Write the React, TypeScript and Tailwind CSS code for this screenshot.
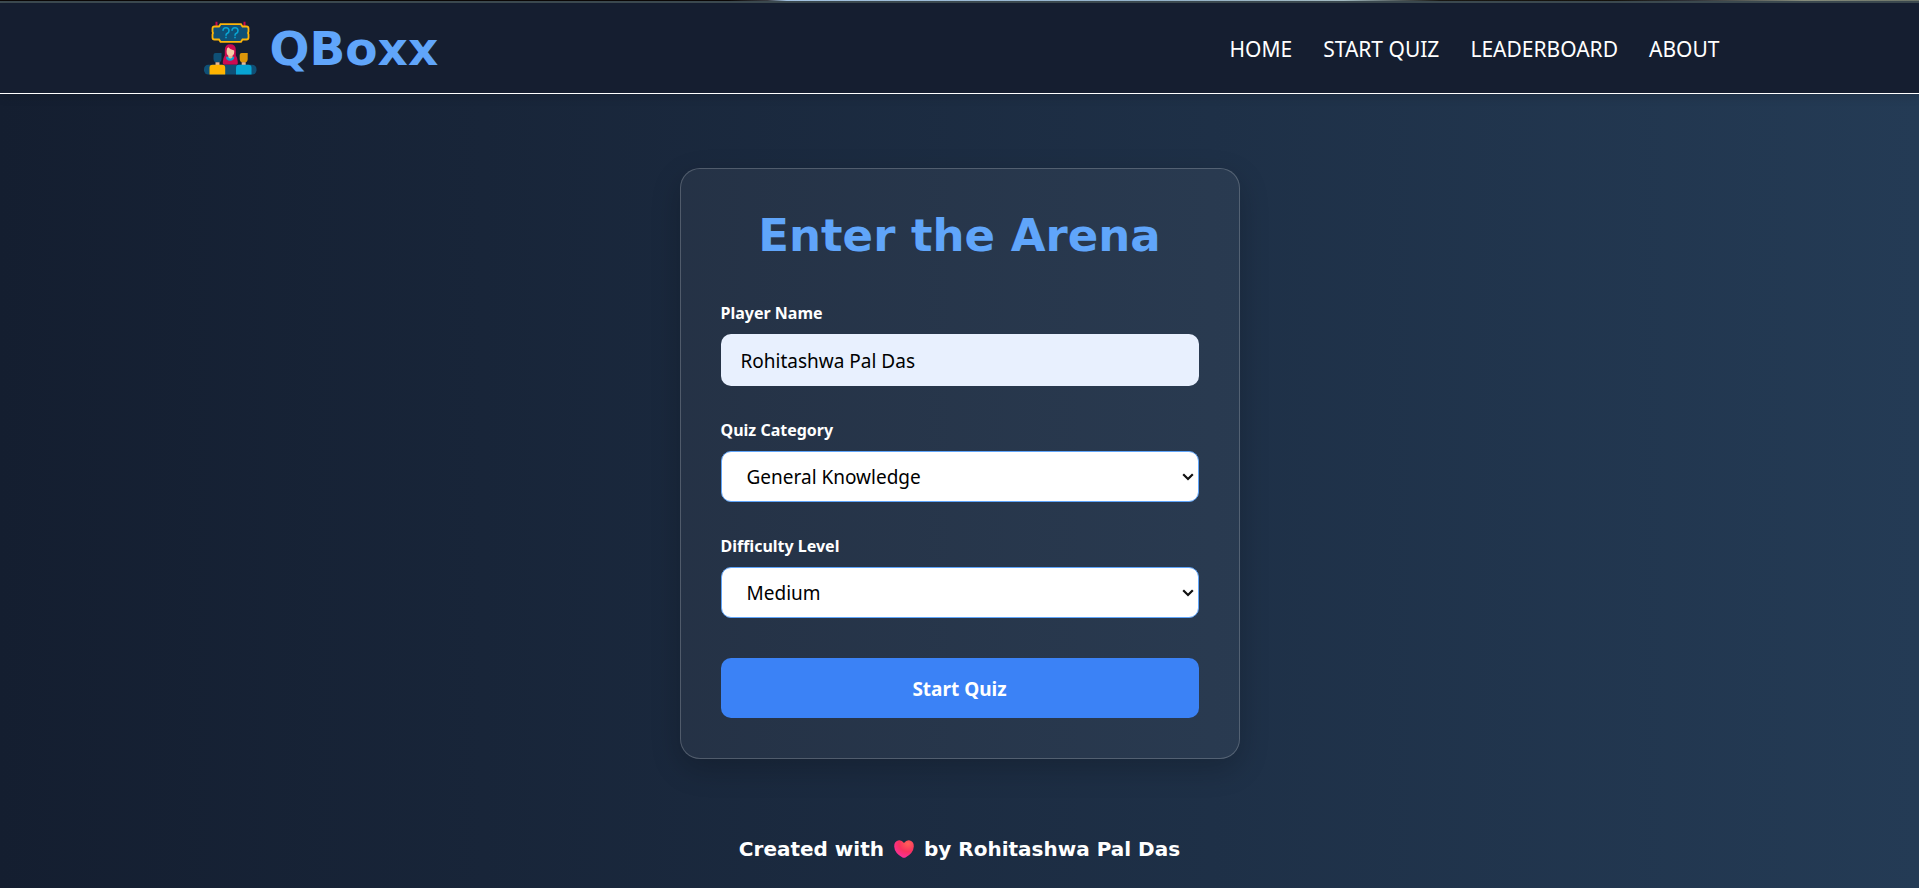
import React from 'react';

const links = ['HOME', 'START QUIZ', 'LEADERBOARD', 'ABOUT'];

const categories = ['General Knowledge', 'Science', 'History', 'Sports'];
const levels = ['Easy', 'Medium', 'Hard'];

function Logo() {
  return (
    <svg viewBox="0 0 60 60" className="h-[60px] w-[60px]" aria-hidden="true">
      <path d="M16.500 3.800v5M44.500 3.800v5" stroke="#c8094f" strokeWidth="2" />
      <path
        d="M20.500 6.200h20.500l1.500 2.300h4q2 0 2 2v3l-.5 1.500.5 1.500v3q0 2-2 2h-4l-1.500 2.300h-20.500l-1.500-2.300h-4.500q-2 0-2-2v-3l.5-1.500-.5-1.500v-3q0-2 2-2h4.500z"
        fill="#0f5076"
        stroke="#fdb509"
        strokeWidth="1.800"
      />
      <path
        d="M23 12.700q0-3 3-3t3 3q0 2-2 2.800-1 .5-1 2.300M32 12.700q0-3 3-3t3 3q0 2-2 2.800-1 .5-1 2.300M26 18.800v1.500M35 18.800v1.500"
        fill="none"
        stroke="#08a5d3"
        strokeWidth="1.600"
      />
      <path d="M24 46.700q-1.600 0-1.200-2.700l.6-3.500q.4-1.500 1.400-3v-5.500q0-5.700 5.500-5.700t5.500 5.700v5.500q1 1.500 1.400 3l.6 3.500q.4 2.700-1.200 2.700z" fill="#cc0b52" />
      <path d="M26 38.800h8.200q0 4-4.100 4t-4.100-4z" fill="#08a5d3" />
      <path d="M28.300 36h4.200v3.200q-2.100 2.600-4.200 0z" fill="#e9b791" />
      <path d="M26.600 33q0-3 1.700-3.700 2 2.700 5.900 3.200v1.500q0 4-3.800 4t-3.800-4z" fill="#f6cda7" />
      <rect x="4" y="46.700" width="52.500" height="9.700" rx="4.200" fill="#0f5076" />
      <path d="M13.500 37q0-2 2-2h6v6q0 3.700-4 3.700t-4-3.700z" fill="#0f5076" />
      <path d="M15.500 44.300h4v3h-4z" fill="#e9b791" />
      <path d="M39.700 37q0-2 2-2h6v6q0 3.700-4 3.700t-4-3.700z" fill="#dc960a" />
      <path d="M41.700 44.300h4v3h-4z" fill="#e9b791" />
      <path d="M9.500 56.400v-6.700q0-3 3-3h9.700q3 0 3 3v6.700z" fill="#ffb400" />
      <path d="M36 56.400v-6.700q0-3 3-3h9.500q3 0 3 3v6.700z" fill="#08a5d3" />
    </svg>
  );
}

function Heart() {
  return (
    <svg viewBox="0 0 20 20" className="h-5 w-5" role="img" aria-label="love">
      <defs>
        <radialGradient id="heart" cx="0.7" cy="0.2" r="0.9">
          <stop offset="0" stopColor="#ff6058" />
          <stop offset="0.5" stopColor="#f8315f" />
          <stop offset="1" stopColor="#f92fa6" />
        </radialGradient>
      </defs>
      <path d="M10 4Q8 1 5 1.200 0 2 .2 7.500.5 14 8.500 18.500q1.500.7 3 0Q19.500 14 19.800 7.500 20 2 15 1.200 12 1 10 4z" fill="url(#heart)" />
    </svg>
  );
}

function SelectField({ id, label, options, value }: { id: string; label: string; options: string[]; value: string }) {
  return (
    <div className="flex flex-col gap-[7px]">
      <label htmlFor={id} className="text-[16px] leading-7 font-bold">
        {label}
      </label>
      <div className="grid items-center">
        <select
          id={id}
          defaultValue={value}
          className="col-start-1 row-start-1 h-[51px] w-full appearance-none rounded-[10px] border border-[#60a5fa] bg-white px-[25px] pt-0.5 text-[19px] text-black"
        >
          {options.map((o) => (
            <option key={o}>{o}</option>
          ))}
        </select>
        <svg
          viewBox="0 0 12 8"
          className="pointer-events-none col-start-1 row-start-1 mr-[5px] h-2 w-3 justify-self-end"
          aria-hidden="true"
        >
          <path d="M1.200 1.200 6 6 10.800 1.200" fill="none" stroke="#111" strokeWidth="2.200" />
        </svg>
      </div>
    </div>
  );
}

export default function App() {
  return (
    <div className="flex min-h-screen flex-col bg-linear-to-r from-[#141e30] to-[#243b55] font-['Noto_Sans','Open_Sans',sans-serif] text-white">
      <div className="h-px bg-[linear-gradient(to_right,#0c0807_38%,#3a3c42_40%,#a8c8e8_41%,#98b8d0_60%,#a8c0c8_70%,#1a1814_75%,#15120c_84%,#303238_88%,#8a9080_94%,#70786c)]" />
      <div className="h-0.5 bg-[#3e4c52]" />
      <header className="border-b border-white bg-[#151e30] shadow-[0_2px_10px_rgba(0,0,0,0.15)]">
        <div className="mx-auto flex h-[90px] max-w-screen-2xl items-center justify-between px-2">
          <a href="#home" className="flex items-center gap-2.5">
            <Logo />
            <span className="pt-0.5 font-['DejaVu_Sans',sans-serif] text-[47px] leading-[56px] font-bold text-[#60a5fa]">QBoxx</span>
          </a>
          <nav className="flex gap-[31px] pt-[3px] text-[21px]">
            {links.map((l) => (
              <a key={l} href="#">
                {l}
              </a>
            ))}
          </nav>
        </div>
      </header>

      <main className="flex flex-1 justify-center px-4 pt-[74px]">
        <form className="w-full max-w-[560px] self-start rounded-[20px] border border-white/20 bg-white/[0.05] p-10 shadow-[0_10px_30px_rgba(0,0,0,0.2)]">
          <h1 className="mb-9 text-center font-['DejaVu_Sans',sans-serif] text-[45px] leading-[54px] font-bold text-[#60a5fa]">
            Enter the Arena
          </h1>
          <div className="flex flex-col gap-[30px]">
            <div className="flex flex-col gap-[7px]">
              <label htmlFor="player" className="text-[16px] leading-7 font-bold">
                Player Name
              </label>
              <input
                id="player"
                type="text"
                defaultValue="Rohitashwa Pal Das"
                className="h-[52px] w-full rounded-[10px] bg-[#e8f0fe] px-5 pt-0.5 text-[19px] text-black"
              />
            </div>
            <SelectField id="category" label="Quiz Category" options={categories} value="General Knowledge" />
            <SelectField id="level" label="Difficulty Level" options={levels} value="Medium" />
          </div>
          <button type="button" className="mt-10 h-[60px] w-full rounded-[10px] bg-[#3b82f6] pt-0.5 text-[19px] font-bold">
            Start Quiz
          </button>
        </form>
      </main>

      <footer className="flex items-center justify-center gap-2.5 pb-6 font-['DejaVu_Sans',sans-serif] text-[20px] leading-[30px] font-bold">
        <span>Created with</span>
        <Heart />
        <span>by Rohitashwa Pal Das</span>
      </footer>
    </div>
  );
}
